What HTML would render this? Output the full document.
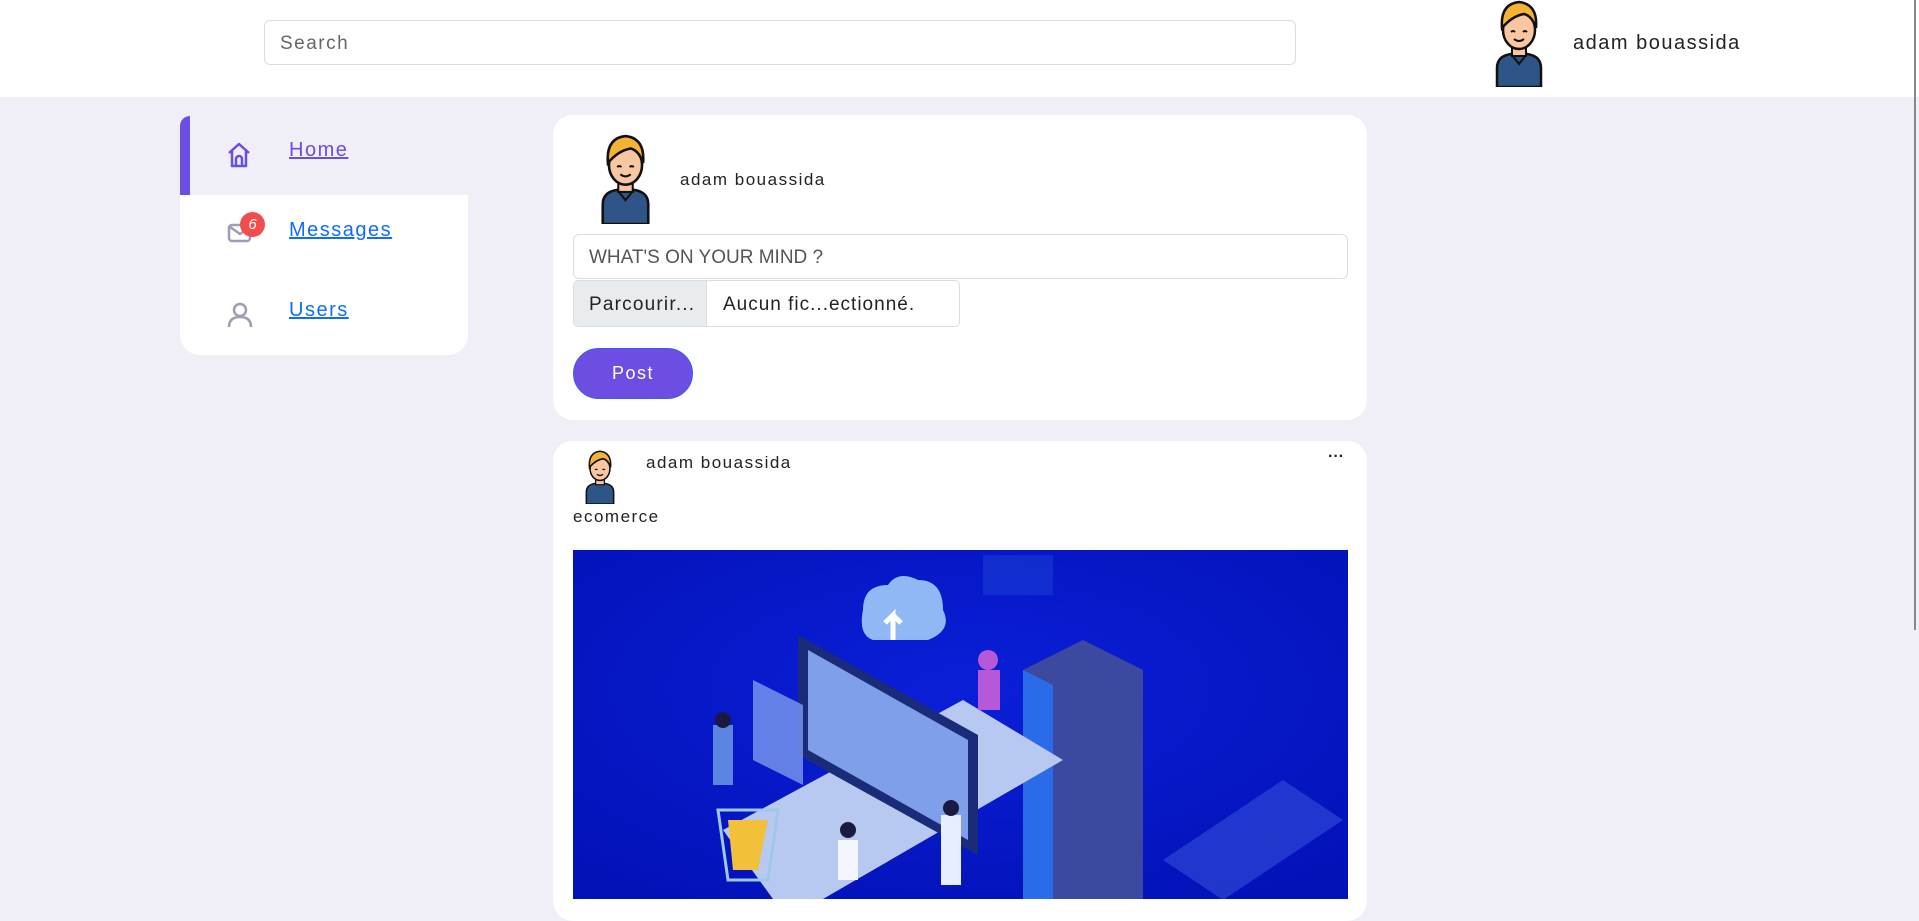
<!DOCTYPE html>
<html><head><meta charset="utf-8"><style>
*{box-sizing:border-box;margin:0;padding:0}
body{width:1919px;height:899px;overflow:hidden;background:#f0eff8;font-family:"Liberation Sans",sans-serif;position:relative;letter-spacing:1.5px}
.abs{position:absolute}
header{position:absolute;left:0;top:0;width:1919px;height:97px;background:#fff}
.search{left:264px;top:20px;width:1032px;height:45px;border:1px solid #dcdce0;border-radius:6px;background:#fff;font-size:19px;color:#666;padding:12px 15px}
.name{font-size:20px;color:#222}
.side{left:180px;top:195px;width:288px;height:160px;background:#fff;border-radius:0 0 20px 20px}
.bar{left:180px;top:116px;width:10px;height:79px;background:#6c4ee3;border-radius:10px 0 0 0}
.link{font-size:20px;text-decoration:underline;color:#0d6efd}
.card{background:#fff;border-radius:20px}
</style></head><body>
<header></header>
<div class="abs search">Search</div>
<svg class="abs" style="left:1491px;top:0" width="56" height="87" viewBox="0 0 56 87"><path d="M6 87V68q0-12 14-14h16q14 2 14 14v19z" fill="#2f5487" stroke="#111" stroke-width="2.5"/><path d="M20 54l8 10 8-10" fill="#2f5487" stroke="#111" stroke-width="2"/><rect x="21" y="44" width="14" height="12" fill="#f8c6a0" stroke="#111" stroke-width="2"/><ellipse cx="28" cy="30" rx="16" ry="19" fill="#f8c6a0" stroke="#111" stroke-width="2.5"/><path d="M11 28q-2-24 17-26q19 2 17 26q-4-12-12-14q-12 2-22 14z" fill="#f5b335" stroke="#111" stroke-width="2.5"/><path d="M20 32q2-2 4 0M32 32q2-2 4 0M23 39q5 4 10 0" fill="none" stroke="#111" stroke-width="2"/></svg>
<div class="abs name" style="left:1573px;top:32px">adam bouassida</div>
<div class="abs" style="left:1914px;top:0;width:2px;height:630px;background:#888"></div>

<div class="abs side"></div>
<div class="abs bar"></div>
<svg class="abs" style="left:227px;top:142px" width="24" height="26" viewBox="0 0 24 26"><path d="M2 11L12 2l10 9M5 9v15h14V9M9 24v-7a3 3 0 0 1 6 0v7" fill="none" stroke="#6c4ee3" stroke-width="2.5" stroke-linejoin="round"/></svg>
<div class="abs link" style="left:289px;top:139px;color:#6c4ee3">Home</div>
<svg class="abs" style="left:227px;top:222px" width="26" height="22" viewBox="0 0 26 22"><rect x="2" y="3" width="21" height="16" rx="3" fill="none" stroke="#a09cb8" stroke-width="2.5"/><path d="M3 5l10 7 10-7" fill="none" stroke="#a09cb8" stroke-width="2.5"/></svg>
<div class="abs" style="left:240px;top:212px;width:25px;height:25px;border-radius:50%;background:#f24c4c;color:#fff;font-size:15px;font-style:italic;text-align:center;line-height:25px;letter-spacing:0">6</div>
<div class="abs link" style="left:289px;top:219px">Messages</div>
<svg class="abs" style="left:227px;top:302px" width="26" height="26" viewBox="0 0 26 26"><circle cx="13" cy="8" r="6" fill="none" stroke="#a09cb8" stroke-width="2.5"/><path d="M2 25q0-10 11-10t11 10" fill="none" stroke="#a09cb8" stroke-width="2.5"/></svg>
<div class="abs link" style="left:289px;top:299px">Users</div>

<div class="abs card" style="left:553px;top:115px;width:814px;height:305px"></div>
<svg class="abs" style="left:596px;top:134px" width="59" height="90" viewBox="0 0 56 87"><path d="M6 87V68q0-12 14-14h16q14 2 14 14v19z" fill="#2f5487" stroke="#111" stroke-width="2.5"/><path d="M20 54l8 10 8-10" fill="#2f5487" stroke="#111" stroke-width="2"/><rect x="21" y="44" width="14" height="12" fill="#f8c6a0" stroke="#111" stroke-width="2"/><ellipse cx="28" cy="30" rx="16" ry="19" fill="#f8c6a0" stroke="#111" stroke-width="2.5"/><path d="M11 28q-2-24 17-26q19 2 17 26q-4-12-12-14q-12 2-22 14z" fill="#f5b335" stroke="#111" stroke-width="2.5"/><path d="M20 32q2-2 4 0M32 32q2-2 4 0M23 39q5 4 10 0" fill="none" stroke="#111" stroke-width="2"/></svg>
<div class="abs" style="left:680px;top:170px;font-size:17px;color:#222">adam bouassida</div>
<div class="abs" style="left:573px;top:234px;width:775px;height:45px;border:1px solid #dcdce0;border-radius:6px;font-size:19px;color:#555;padding:12px 15px;letter-spacing:0">WHAT'S ON YOUR MIND ?</div>
<div class="abs" style="left:573px;top:280px;width:387px;height:47px;border:1px solid #dcdce0;border-radius:5px;overflow:hidden;font-size:19px;color:#222">
<div class="abs" style="left:0;top:0;width:133px;height:47px;background:#e9ecef;border-right:1px solid #dcdce0;padding:13px 15px;letter-spacing:1.2px;white-space:nowrap">Parcourir...</div>
<div class="abs" style="left:149px;top:13px;letter-spacing:1px;white-space:nowrap">Aucun fic...ectionné.</div></div>
<div class="abs" style="left:573px;top:348px;width:120px;height:51px;border-radius:26px;background:#6c4ee3;border:1px solid #3d5cf5;color:#fff;font-size:18px;text-align:center;line-height:49px">Post</div>

<div class="abs card" style="left:553px;top:441px;width:814px;height:480px"></div>
<svg class="abs" style="left:580px;top:450px" width="40" height="54" viewBox="0 0 56 87"><path d="M6 87V68q0-12 14-14h16q14 2 14 14v19z" fill="#2f5487" stroke="#111" stroke-width="2.5"/><rect x="21" y="44" width="14" height="12" fill="#f8c6a0" stroke="#111" stroke-width="2"/><ellipse cx="28" cy="30" rx="16" ry="19" fill="#f8c6a0" stroke="#111" stroke-width="2.5"/><path d="M11 28q-2-24 17-26q19 2 17 26q-4-12-12-14q-12 2-22 14z" fill="#f5b335" stroke="#111" stroke-width="2.5"/><path d="M20 32q2-2 4 0M32 32q2-2 4 0M23 39q5 4 10 0" fill="none" stroke="#111" stroke-width="2"/></svg>
<div class="abs" style="left:646px;top:453px;font-size:17px;color:#222">adam bouassida</div>
<div class="abs" style="left:1328px;top:448px;font-size:16px;font-weight:bold;color:#222;letter-spacing:0">···</div>
<div class="abs" style="left:573px;top:507px;font-size:17px;color:#222">ecomerce</div>
<svg class="abs" style="left:573px;top:550px" width="775" height="349" viewBox="0 0 775 349">
<defs><radialGradient id="g" cx="50%" cy="40%" r="70%"><stop offset="0" stop-color="#0a1fd8"/><stop offset="1" stop-color="#0312b8"/></radialGradient></defs>
<rect width="775" height="349" fill="url(#g)"/>
<path d="M590 310l120-80 60 40-120 80z" fill="#3c5ae0" opacity=".5"/>
<path d="M450 120l60-30 60 30v229H450z" fill="#3b4a9e"/>
<path d="M450 120l30 15v214h-30z" fill="#2b6ae8"/>
<path d="M150 280l240-130 100 60-240 139H200z" fill="#b7c9f0"/>
<path d="M225 85l180 100v120L225 205z" fill="#1a2b7a"/>
<path d="M235 100l160 90v100L235 200z" fill="#7f9fe8"/>
<path d="M180 130l50 25v80l-50-25z" fill="#7c9af0" opacity=".8"/>
<path d="M290 60q0-25 25-25q10-15 30-5q25 0 25 30q10 20-15 30h-55q-15-5-10-30z" fill="#8fb8f5"/>
<path d="M320 90v-25l-8 8M320 65l8 8" stroke="#fff" stroke-width="5" fill="none"/>
<rect x="410" y="5" width="70" height="40" fill="#2a5de0" opacity=".3"/>
<circle cx="415" cy="110" r="10" fill="#b659d8"/><rect x="405" y="120" width="22" height="40" fill="#b659d8"/>
<path d="M155 270h40l-10 50h-25z" fill="#f2c03a"/><path d="M145 260h60l-10 70h-40z" fill="none" stroke="#9ec7ea" stroke-width="3"/>
<rect x="140" y="175" width="20" height="60" fill="#5b85e0"/>
<circle cx="150" cy="170" r="8" fill="#1a1a40"/>
<rect x="265" y="290" width="20" height="40" fill="#f4f6ff"/><circle cx="275" cy="280" r="8" fill="#1a1a40"/>
<rect x="368" y="265" width="20" height="70" fill="#e6efff"/><circle cx="378" cy="258" r="8" fill="#1a1a40"/>
</svg>
</body></html>
